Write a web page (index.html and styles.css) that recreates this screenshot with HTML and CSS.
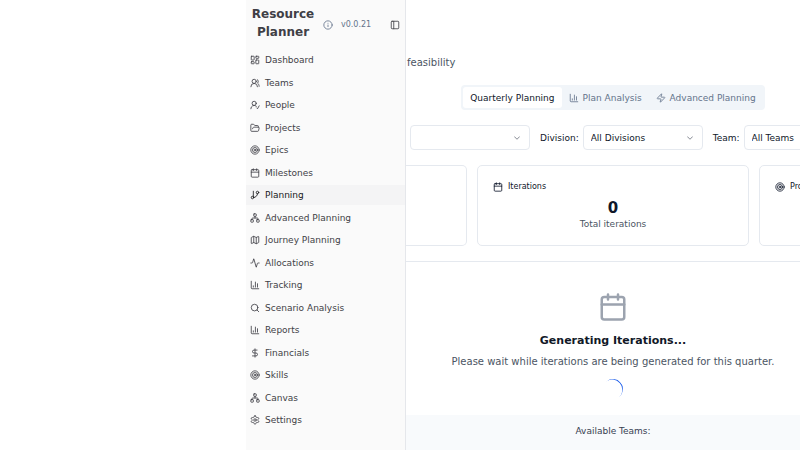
FILE: index.html
```html
<!DOCTYPE html>
<html lang="en">
<head>
<meta charset="utf-8">
<title>Resource Planner</title>
<link rel="stylesheet" href="styles.css">
</head>
<body>
<svg class="sprite" aria-hidden="true">
  <symbol id="dashboard" viewBox="0 0 24 24"><rect width="7" height="9" x="3" y="3" rx="1"/><rect width="7" height="5" x="14" y="3" rx="1"/><rect width="7" height="9" x="14" y="12" rx="1"/><rect width="7" height="5" x="3" y="16" rx="1"/></symbol>
  <symbol id="users" viewBox="0 0 24 24"><path d="M18 21a8 8 0 0 0-16 0"/><circle cx="10" cy="8" r="5"/><path d="M22 20c0-3.370-2-6.500-4-8a5 5 0 0 0-.450-8.300"/></symbol>
  <symbol id="person" viewBox="0 0 24 24"><path d="M2 21a8 8 0 0 1 13.292-6"/><circle cx="10" cy="8" r="5"/><path d="m16 19 2 2 4-7"/></symbol>
  <symbol id="folder" viewBox="0 0 24 24"><path d="m6 14 1.500-2.900A2 2 0 0 1 9.240 10H20a2 2 0 0 1 1.940 2.500l-1.540 6a2 2 0 0 1-1.950 1.500H4a2 2 0 0 1-2-2V5a2 2 0 0 1 2-2h3.900a2 2 0 0 1 1.690.900l.810 1.200a2 2 0 0 0 1.670.900H18a2 2 0 0 1 2 2v2"/></symbol>
  <symbol id="target" viewBox="0 0 24 24"><circle cx="12" cy="12" r="10"/><circle cx="12" cy="12" r="6"/><circle cx="12" cy="12" r="2"/></symbol>
  <symbol id="calendar" viewBox="0 0 24 24"><path d="M8 2v4M16 2v4M3 10h18"/><rect width="18" height="18" x="3" y="4" rx="2"/></symbol>
  <symbol id="branch" viewBox="0 0 24 24"><path d="M8 3v14"/><circle cx="18" cy="6" r="3"/><circle cx="6" cy="18" r="3"/><path d="M18 9a9 9 0 0 1-9 9"/></symbol>
  <symbol id="network" viewBox="0 0 24 24"><rect x="16" y="16" width="6" height="6" rx="1"/><rect x="2" y="16" width="6" height="6" rx="1"/><rect x="9" y="2" width="6" height="6" rx="1"/><path d="M5 16v-3a1 1 0 0 1 1-1h12a1 1 0 0 1 1 1v3M12 12V8"/></symbol>
  <symbol id="map" viewBox="0 0 24 24"><path d="M14.106 5.553a2 2 0 0 0 1.788 0l3.659-1.830A1 1 0 0 1 21 4.619v12.764a1 1 0 0 1-.553.894l-4.553 2.277a2 2 0 0 1-1.788 0l-4.212-2.106a2 2 0 0 0-1.788 0l-3.659 1.830A1 1 0 0 1 3 19.381V6.618a1 1 0 0 1 .553-.894l4.553-2.277a2 2 0 0 1 1.788 0zM15 5.764v15M9 3.236v15"/></symbol>
  <symbol id="activity" viewBox="0 0 24 24"><path d="M22 12h-2.480a2 2 0 0 0-1.930 1.460l-2.350 8.360a.250.250 0 0 1-.480 0L9.240 2.180a.250.250 0 0 0-.480 0l-2.350 8.360A2 2 0 0 1 4.490 12H2"/></symbol>
  <symbol id="chart" viewBox="0 0 24 24"><path d="M3 3v16a2 2 0 0 0 2 2h16M18 17V9M13 17V5M8 17v-3"/></symbol>
  <symbol id="search" viewBox="0 0 24 24"><circle cx="11" cy="11" r="8"/><path d="m21 21-4.300-4.300"/></symbol>
  <symbol id="dollar" viewBox="0 0 24 24"><path d="M12 2v20M17 5H9.500a3.500 3.500 0 0 0 0 7h5a3.500 3.500 0 0 1 0 7H6"/></symbol>
  <symbol id="settings" viewBox="0 0 24 24"><path d="M12.220 2h-.440a2 2 0 0 0-2 2v.180a2 2 0 0 1-1 1.730l-.430.250a2 2 0 0 1-2 0l-.150-.080a2 2 0 0 0-2.730.730l-.220.380a2 2 0 0 0 .730 2.730l.150.100a2 2 0 0 1 1 1.720v.510a2 2 0 0 1-1 1.740l-.150.090a2 2 0 0 0-.730 2.730l.220.380a2 2 0 0 0 2.730.730l.150-.080a2 2 0 0 1 2 0l.430.250a2 2 0 0 1 1 1.730V20a2 2 0 0 0 2 2h.440a2 2 0 0 0 2-2v-.180a2 2 0 0 1 1-1.730l.430-.250a2 2 0 0 1 2 0l.150.080a2 2 0 0 0 2.730-.730l.220-.390a2 2 0 0 0-.730-2.730l-.150-.080a2 2 0 0 1-1-1.740v-.500a2 2 0 0 1 1-1.740l.150-.090a2 2 0 0 0 .730-2.730l-.220-.380a2 2 0 0 0-2.730-.730l-.150.080a2 2 0 0 1-2 0l-.430-.250a2 2 0 0 1-1-1.730V4a2 2 0 0 0-2-2z"/><circle cx="12" cy="12" r="3"/></symbol>
  <symbol id="info" viewBox="0 0 24 24"><circle cx="12" cy="12" r="10"/><path d="M12 16v-4M12 8h.010"/></symbol>
  <symbol id="panel" viewBox="0 0 24 24"><rect width="18" height="18" x="3" y="3" rx="2"/><path d="M9 3v18"/></symbol>
  <symbol id="zap" viewBox="0 0 24 24"><path d="M4 14a1 1 0 0 1-.780-1.630l9.900-10.200a.500.500 0 0 1 .860.460l-1.920 6.020A1 1 0 0 0 13 10h7a1 1 0 0 1 .780 1.630l-9.900 10.200a.500.500 0 0 1-.860-.460l1.920-6.020A1 1 0 0 0 11 14z"/></symbol>
  <symbol id="chevron" viewBox="0 0 24 24"><path d="m6 9 6 6 6-6"/></symbol>
</svg>
<div class="app">
  <aside class="sidebar">
    <header class="brand">
      <h2>Resource Planner</h2>
      <svg class="icon info"><use href="#info"/></svg>
      <span class="version">v0.0.21</span>
      <button class="toggle" type="button"><svg class="icon"><use href="#panel"/></svg></button>
    </header>
    <nav class="nav">
      <a href="#"><svg class="icon"><use href="#dashboard"/></svg>Dashboard</a>
      <a href="#"><svg class="icon"><use href="#users"/></svg>Teams</a>
      <a href="#"><svg class="icon"><use href="#person"/></svg>People</a>
      <a href="#"><svg class="icon"><use href="#folder"/></svg>Projects</a>
      <a href="#"><svg class="icon"><use href="#target"/></svg>Epics</a>
      <a href="#"><svg class="icon"><use href="#calendar"/></svg>Milestones</a>
      <a href="#" class="current"><svg class="icon"><use href="#branch"/></svg>Planning</a>
      <a href="#"><svg class="icon"><use href="#network"/></svg>Advanced Planning</a>
      <a href="#"><svg class="icon"><use href="#map"/></svg>Journey Planning</a>
      <a href="#"><svg class="icon"><use href="#activity"/></svg>Allocations</a>
      <a href="#"><svg class="icon"><use href="#chart"/></svg>Tracking</a>
      <a href="#"><svg class="icon"><use href="#search"/></svg>Scenario Analysis</a>
      <a href="#"><svg class="icon"><use href="#chart"/></svg>Reports</a>
      <a href="#"><svg class="icon"><use href="#dollar"/></svg>Financials</a>
      <a href="#"><svg class="icon"><use href="#target"/></svg>Skills</a>
      <a href="#"><svg class="icon"><use href="#network"/></svg>Canvas</a>
      <a href="#"><svg class="icon"><use href="#settings"/></svg>Settings</a>
    </nav>
  </aside>
  <main class="main">
    <div class="content">
      <p class="intro">feasibility</p>
      <div class="tabs" role="tablist">
        <button class="tab active" type="button" role="tab" aria-selected="true">Quarterly Planning</button>
        <button class="tab" type="button" role="tab"><svg class="icon"><use href="#chart"/></svg>Plan Analysis</button>
        <button class="tab" type="button" role="tab"><svg class="icon"><use href="#zap"/></svg>Advanced Planning</button>
      </div>
      <form class="filters">
        <div class="select"><select id="quarter"><option></option></select><svg class="icon"><use href="#chevron"/></svg></div>
        <label for="division">Division:</label>
        <div class="select"><select id="division"><option>All Divisions</option></select><svg class="icon"><use href="#chevron"/></svg></div>
        <label for="team">Team:</label>
        <div class="select"><select id="team"><option>All Teams</option></select><svg class="icon"><use href="#chevron"/></svg></div>
      </form>
      <section class="cards">
        <article class="card cut"></article>
        <article class="card">
          <h3><svg class="icon"><use href="#calendar"/></svg>Iterations</h3>
          <strong>0</strong>
          <p>Total iterations</p>
        </article>
        <article class="card">
          <h3><svg class="icon"><use href="#target"/></svg>Pro</h3>
        </article>
      </section>
      <section class="status">
        <svg class="icon large"><use href="#calendar"/></svg>
        <h3>Generating Iterations...</h3>
        <p>Please wait while iterations are being generated for this quarter.</p>
        <div class="spinner"></div>
      </section>
      <footer class="teams">Available Teams:</footer>
    </div>
  </main>
</div>
</body>
</html>
```
FILE: styles.css
```css
* { box-sizing: border-box; margin: 0; }

body {
  font: 9px/12px "DejaVu Sans", sans-serif;
  color: #0f172a;
  background: #fff;
  overflow: hidden;
}

button, select { font: inherit; color: inherit; }

.sprite { display: none; }

.icon {
  width: 10px;
  height: 10px;
  flex: none;
  fill: none;
  stroke: currentColor;
  stroke-width: 2;
  stroke-linecap: round;
  stroke-linejoin: round;
}

.app {
  display: grid;
  grid-template-columns: 246px 160px minmax(0, 1fr);
  height: 100vh;
}

/* Sidebar */
.sidebar {
  grid-column: 2;
  display: flex;
  flex-direction: column;
  background: #fafafa;
  border-right: 1px solid #e5e7eb;
  color: #3f3f46;
}

.brand {
  display: flex;
  align-items: center;
  height: 50px;
  padding: 0 5px;
}

.brand h2 {
  width: 64px;
  margin: 0 8px 5px 0;
  font-size: 12px;
  line-height: 18px;
  text-align: center;
}

.brand .info { color: #64748b; }

.version {
  margin-left: 8px;
  font-size: 8px;
  color: #64748b;
}

.toggle {
  display: flex;
  margin-left: auto;
  padding: 0;
  border: 0;
  background: none;
}

.nav {
  flex: 1;
  display: flex;
  flex-direction: column;
  justify-content: space-between;
  padding-bottom: 20px;
}

.nav a {
  display: flex;
  align-items: center;
  gap: 5px;
  height: 20px;
  padding: 0 4px;
  color: inherit;
  text-decoration: none;
}

.nav .current {
  background: #f4f4f5;
  color: #18181b;
}

/* Main area */
.main {
  grid-column: 3;
  overflow: hidden;
}

.content {
  display: flex;
  flex-direction: column;
  width: calc(100% + 20px);
  height: 100%;
}

.intro {
  padding: 55px 0 0 1px;
  font-size: 10px;
  line-height: 15px;
  color: #4b5563;
}

.tabs {
  display: flex;
  align-self: center;
  height: 25px;
  margin-top: 15px;
  padding: 2px;
  border-radius: 4px;
  background: #f1f5f9;
}

.tab {
  display: flex;
  align-items: center;
  gap: 4px;
  padding: 0 7px;
  border: 0;
  border-radius: 3px;
  background: none;
  color: #64748b;
  white-space: nowrap;
}

.tab.active {
  background: #fff;
  color: #0f172a;
}

.filters {
  display: flex;
  align-items: center;
  margin: 15px 0 0 4px;
}

.filters label { margin: 0 4px 0 10px; }

.select {
  position: relative;
  flex: none;
  width: 120px;
}

.select select {
  appearance: none;
  width: 100%;
  height: 25px;
  padding: 0 7px;
  border: 1px solid #e5e9ef;
  border-radius: 4px;
  background: #fff;
}

.select .icon {
  position: absolute;
  top: 8px;
  right: 8px;
  opacity: 0.6;
  pointer-events: none;
}

.cards {
  display: grid;
  grid-template-columns: 61px 272px 272px;
  gap: 10px;
  padding: 15px 0;
  border-bottom: 1px solid #e5e9ef;
}

.card {
  height: 81px;
  padding: 15px;
  border: 1px solid #e5e9ef;
  border-radius: 5px;
  text-align: center;
}

.card.cut {
  border-left: 0;
  border-radius: 0 5px 5px 0;
}

.card h3 {
  display: flex;
  align-items: center;
  gap: 5px;
  font-size: 8px;
  font-weight: 400;
}

.card strong {
  display: block;
  margin-top: 5px;
  font-size: 15px;
  line-height: 20px;
}

.card p { color: #4b5563; }

.status {
  flex: 1;
  display: flex;
  flex-direction: column;
  align-items: center;
  padding-top: 30px;
}

.icon.large {
  width: 30px;
  height: 30px;
  color: #9ca3af;
}

.status h3 {
  margin-top: 10px;
  font-size: 11px;
  line-height: 18px;
  color: #111827;
}

.status p {
  margin-top: 4px;
  font-size: 10px;
  line-height: 15px;
  color: #4b5563;
}

.spinner {
  width: 20px;
  height: 20px;
  margin-top: 10px;
  border-top: 1px solid #2563eb;
  border-radius: 50%;
  transform: rotate(50deg);
}

.teams {
  height: 35px;
  padding-top: 10px;
  background: #f8fafc;
  color: #374151;
  text-align: center;
}
```
